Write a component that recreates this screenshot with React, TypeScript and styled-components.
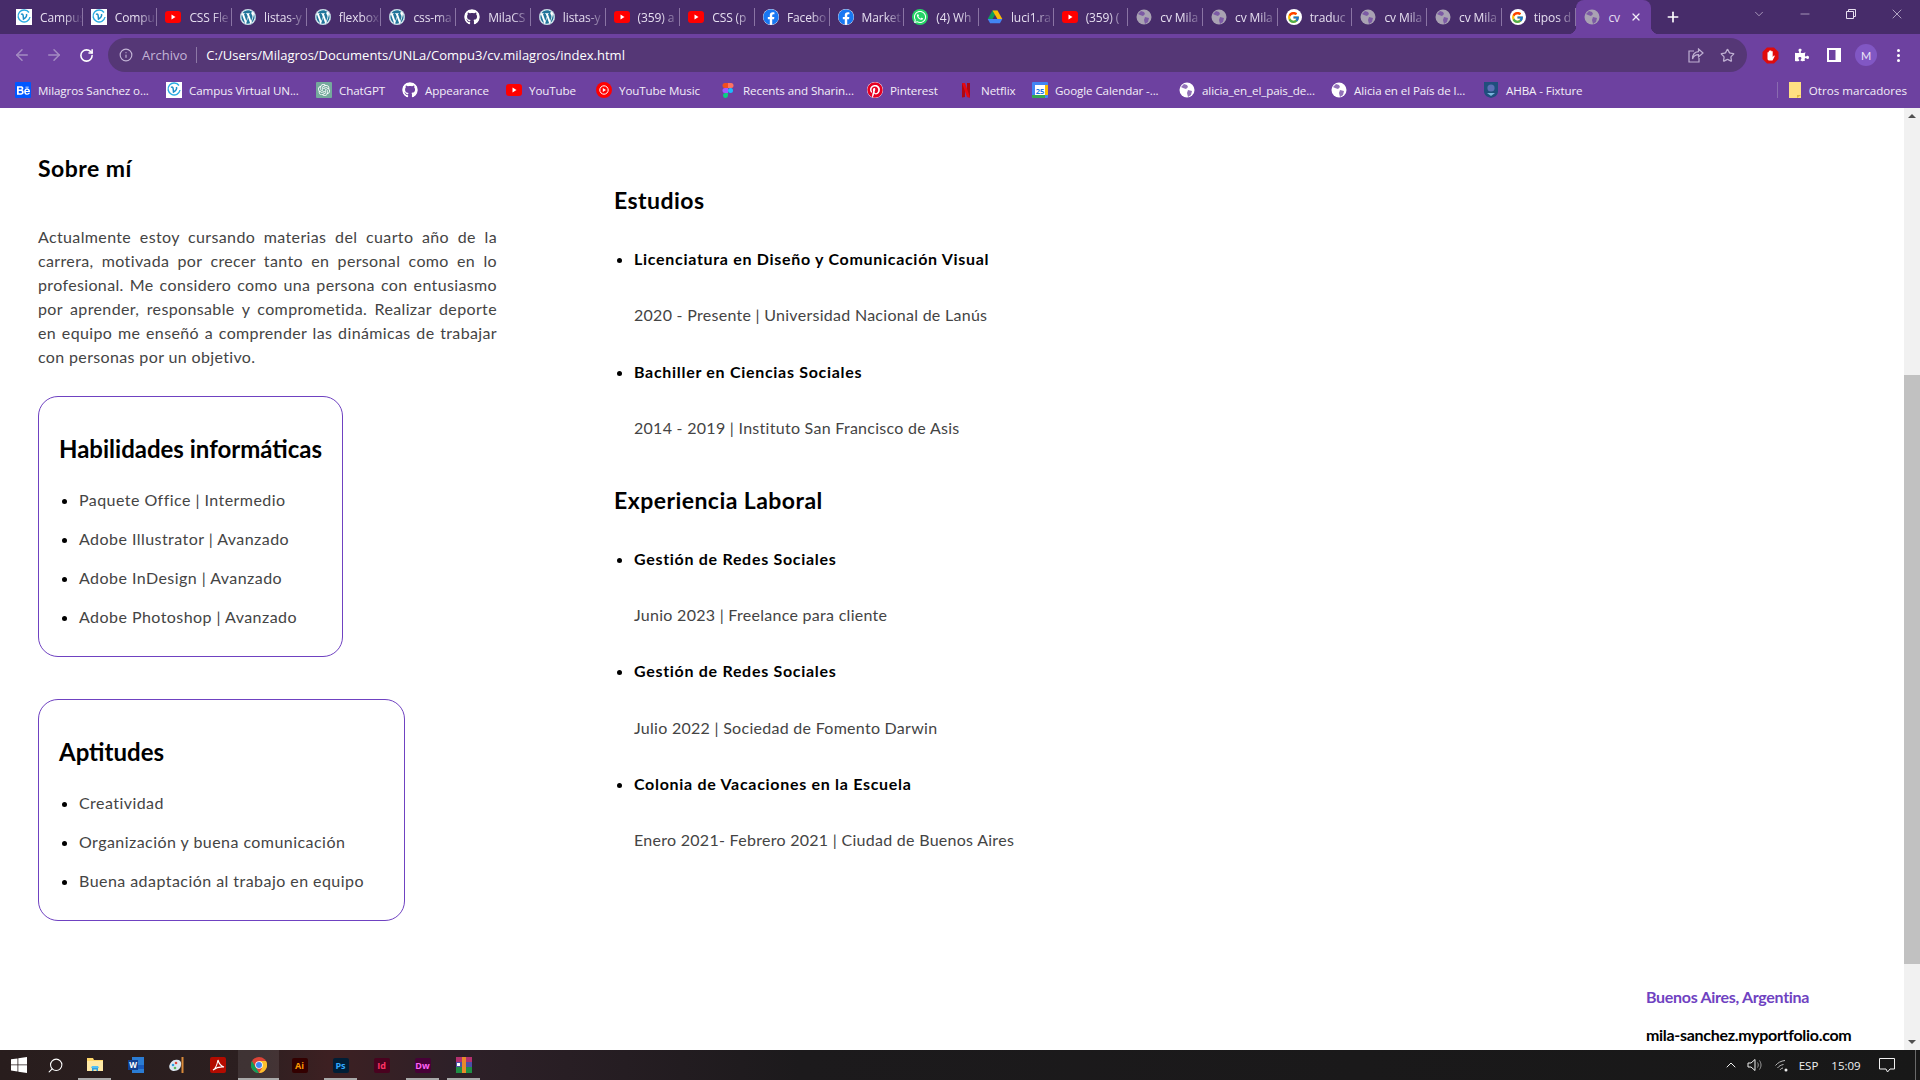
import React, { ReactNode } from 'react';
import styled, { createGlobalStyle } from 'styled-components';
import {
  ArrowLeft,
  ArrowRight,
  ChevronDown,
  ChevronUp,
  Info,
  Minus,
  Plus,
  RotateCw,
  Search,
  Star,
  X,
} from 'lucide-react';
import {
  FaFacebook,
  FaGithub,
  FaPinterest,
  FaPuzzlePiece,
  FaWhatsapp,
  FaWordpress,
} from 'react-icons/fa';
import { FcGoogle } from 'react-icons/fc';
import { SiBehance, SiOpenai } from 'react-icons/si';

const GlobalStyle = createGlobalStyle`
  html, body {
    margin: 0;
    height: 100%;
    overflow: hidden;
    background: #fff;
  }
  #root { height: 100%; }
`;

const Screen = styled.div`
  display: flex;
  flex-direction: column;
  height: 1080px;
  font-family: 'Lato', 'Open Sans', sans-serif;
`;

/* ---- browser chrome ---- */
const TabStrip = styled.div`
  display: flex;
  align-items: flex-end;
  height: 34px;
  padding-left: 8px;
  background: #472c6a;
  font-family: 'Open Sans', sans-serif;
  flex: none;
`;

const Tab = styled.div`
  position: relative;
  display: flex;
  align-items: center;
  gap: 8px;
  flex: none;
  width: 74.7px;
  height: 34px;
  padding-left: 8px;
  box-sizing: border-box;
  color: #e6dff0;
  font-size: 12px;
  &::after {
    content: '';
    position: absolute;
    right: 0;
    top: 8px;
    width: 1px;
    height: 18px;
    background: #8a74a4;
  }
`;

const ActiveTab = styled(Tab)`
  background: #6d41a0;
  border-radius: 8px 8px 0 0;
  &::before,
  &::after {
    content: '';
    position: absolute;
    top: auto;
    bottom: 0;
    width: 8px;
    height: 8px;
  }
  &::before {
    left: -8px;
    background: radial-gradient(circle at 0 0, transparent 8px, #6d41a0 8.5px);
  }
  &::after {
    right: -8px;
    background: radial-gradient(circle at 100% 0, transparent 8px, #6d41a0 8.5px);
  }
`;

const TabTitle = styled.span`
  flex: 1;
  min-width: 0;
  white-space: nowrap;
  overflow: hidden;
  letter-spacing: -0.1px;
  -webkit-mask-image: linear-gradient(to right, #000 55%, transparent 100%);
  mask-image: linear-gradient(to right, #000 55%, transparent 100%);
`;

const ActiveTitle = styled.span`
  flex: 1;
  letter-spacing: -0.1px;
`;

const ActiveClose = styled.span`
  display: flex;
  margin-right: 9px;
  color: #f2edf7;
`;

const NewTab = styled.span`
  display: flex;
  align-items: center;
  justify-content: center;
  width: 36px;
  height: 34px;
  margin-left: 4px;
  color: #fff;
`;

const WindowControls = styled.div`
  display: flex;
  align-self: flex-start;
  margin-left: auto;
  height: 28px;
  color: #e8e0f0;
`;

const WindowButton = styled.span`
  display: flex;
  align-items: center;
  justify-content: center;
  width: 46px;
`;

const Toolbar = styled.div`
  display: flex;
  align-items: center;
  height: 42px;
  flex: none;
  padding: 0 0 0 6px;
  box-sizing: border-box;
  background: #6d41a0;
`;

const NavButton = styled.span<{ $dim?: boolean }>`
  display: flex;
  align-items: center;
  justify-content: center;
  width: 32px;
  color: ${(p) => (p.$dim ? '#a48cc2' : '#fff')};
`;

const Omnibox = styled.div`
  display: flex;
  align-items: center;
  width: 1639px;
  height: 34px;
  margin-left: 6px;
  padding: 0 12px 0 11px;
  box-sizing: border-box;
  border-radius: 17px;
  background: #553776;
  font-family: 'Open Sans', sans-serif;
  font-size: 13px;
  color: #fff;
`;

const SchemeLabel = styled.span`
  margin-left: 9px;
  padding-right: 9px;
  border-right: 1px solid #8d78a6;
  color: #c3b4d6;
  line-height: 16px;
`;

const UrlText = styled.span`
  margin-left: 9px;
`;

const OmniActions = styled.div`
  display: flex;
  align-items: center;
  gap: 16px;
  margin-left: auto;
  color: #bfb0d2;
`;

const ExtensionRow = styled.div`
  display: flex;
  align-items: center;
  margin-left: 7px;
  color: #fff;
`;

const ExtensionSlot = styled.span`
  display: flex;
  align-items: center;
  justify-content: center;
  width: 32px;
`;

const Avatar = styled.span`
  display: flex;
  align-items: center;
  justify-content: center;
  width: 22px;
  height: 22px;
  border-radius: 50%;
  background: #8157c4;
  font-size: 11px;
  color: #efe8f7;
`;

const Dots = styled.span`
  display: flex;
  flex-direction: column;
  gap: 2px;
  span {
    width: 3px;
    height: 3px;
    border-radius: 50%;
    background: #fff;
  }
`;

const BookmarkBar = styled.div`
  display: flex;
  align-items: center;
  height: 32px;
  flex: none;
  padding: 0 0 4px 7px;
  box-sizing: border-box;
  background: #6d41a0;
  font-family: 'Open Sans', sans-serif;
  font-size: 11.6px;
  color: #f3eef8;
`;

const Bookmark = styled.div<{ $width: number }>`
  display: flex;
  align-items: center;
  gap: 7px;
  flex: none;
  width: ${(p) => p.$width}px;
  padding-left: 8px;
  box-sizing: border-box;
  white-space: nowrap;
  letter-spacing: -0.1px;
`;

const OtherBookmarks = styled.div`
  display: flex;
  align-items: center;
  gap: 8px;
  margin-left: auto;
  padding: 0 13px 0 11px;
  height: 16px;
  border-left: 1px solid #8a6bb0;
  white-space: nowrap;
`;

const FaviconBox = styled.span<{ $bg?: string; $color?: string; $round?: boolean }>`
  display: inline-flex;
  align-items: center;
  justify-content: center;
  flex: none;
  width: 16px;
  height: 16px;
  background: ${(p) => p.$bg || 'transparent'};
  color: ${(p) => p.$color || '#fff'};
  border-radius: ${(p) => (p.$round ? '50%' : '1px')};
  overflow: hidden;
`;

const Globe = ({ color }: { color: string }) => (
  <svg width="16" height="16" viewBox="0 0 16 16">
    <circle cx="8" cy="8" r="7.5" fill={color} />
    <path
      d="M5 2l3 1 1 2-2 2-3-1-2-1zM9 8l4 1-1 4-3 2-1-4z"
      fill="#6d41a0"
      opacity="0.75"
    />
  </svg>
);

const CampusIcon = () => (
  <svg width="16" height="16" viewBox="0 0 16 16">
    <rect width="16" height="16" fill="#fff" />
    <path d="M13 3.500A6 6 0 1 0 14 8" fill="none" stroke="#29abe2" strokeWidth="1.400" />
    <path d="M5 5.500c1.500-1 2 0 2.200 1.500l.3 3c2-1 3.500-3 3-5" fill="none" stroke="#1b8fc9" strokeWidth="1.500" />
  </svg>
);

const YouTubeIcon = () => (
  <svg width="16" height="12" viewBox="0 0 16 12">
    <rect width="16" height="12" rx="3" fill="#f00" />
    <path d="M6.500 3.500v5l4-2.500z" fill="#fff" />
  </svg>
);

const YouTubeMusicIcon = () => (
  <svg width="16" height="16" viewBox="0 0 16 16">
    <circle cx="8" cy="8" r="8" fill="#f00" />
    <circle cx="8" cy="8" r="4.200" fill="none" stroke="#fff" />
    <path d="M6.800 6v4L10 8z" fill="#fff" />
  </svg>
);

const DriveIcon = () => (
  <svg width="16" height="16" viewBox="0 0 16 16">
    <path d="M5.500 1.500h5L5.600 10H.7z" fill="#0f9d58" />
    <path d="M10.500 1.500l4.800 8.500h-4.900L5.500 1.500z" fill="#fbbc04" />
    <path d="M.7 10h14.600l-2.400 4.300H3.100z" fill="#4285f4" />
  </svg>
);

const FigmaIcon = () => (
  <svg width="16" height="16" viewBox="0 0 16 16">
    <path d="M5 1h3v5H5a2.500 2.500 0 010-5z" fill="#f24e1e" />
    <path d="M8 1h3a2.500 2.500 0 010 5H8z" fill="#ff7262" />
    <path d="M5 6h3v5H5a2.500 2.500 0 010-5z" fill="#a259ff" />
    <circle cx="10.500" cy="8.500" r="2.500" fill="#1abcfe" />
    <path d="M5 11h3v2.500a2.500 2.500 0 11-3-2.500z" fill="#0acf83" />
  </svg>
);

const NetflixIcon = () => (
  <svg width="16" height="16" viewBox="0 0 16 16">
    <path d="M4 1h3v14l-3 .4z" fill="#b00710" />
    <path d="M9 1h3v14.400l-3-.4z" fill="#b00710" />
    <path d="M4 1h3l5 14.400-3-.4z" fill="#e50914" />
  </svg>
);

const CalendarIcon = () => (
  <svg width="16" height="16" viewBox="0 0 16 16">
    <rect width="16" height="16" rx="1" fill="#4285f4" />
    <rect x="3" y="3" width="10" height="10" fill="#fff" />
    <path d="M0 13h13v3H1a1 1 0 01-1-1z" fill="#34a853" />
    <path d="M13 3h3v10h-3z" fill="#fbbc04" />
    <text x="8" y="11.500" fontSize="7.500" fontWeight="700" fill="#1a73e8" textAnchor="middle" fontFamily="Open Sans">
      25
    </text>
  </svg>
);

const ShieldIcon = () => (
  <svg width="16" height="18" viewBox="0 0 16 18">
    <path d="M1 1h14v9c0 4-3 6-7 7-4-1-7-3-7-7z" fill="#1f4f7d" />
    <circle cx="8" cy="7" r="3.600" fill="#5b6fb5" />
    <path d="M4 12h8l-4 3z" fill="#7ab6dc" />
  </svg>
);

const UBlockIcon = () => (
  <svg width="17" height="17" viewBox="0 0 17 17">
    <path d="M5 .5h7L16.500 5v7L12 16.500H5L.5 12V5z" fill="#e00b0b" />
    <path
      d="M5.500 8V5.500a.7.7 0 011.300 0V4a.7.7 0 011.300 0v-.3a.7.7 0 011.300 0V4.500a.7.7 0 011.300 0V10l1-1.200c.6-.5 1.200 0 .9.600L10.500 13.500H7c-1 0-1.500-1-1.500-2z"
      fill="#fff"
    />
  </svg>
);

const SidePanelIcon = () => (
  <svg width="14" height="14" viewBox="0 0 14 14">
    <path d="M0 0h14v14H0z" fill="#fff" />
    <path d="M2 2h6.500v10H2z" fill="#6d41a0" />
  </svg>
);

const ShareIcon = () => (
  <svg width="16" height="15" viewBox="0 0 16 15" fill="none" stroke="currentColor" strokeWidth="1.200">
    <path d="M6 3H1v11h10V10" />
    <path d="M10.500 1L15 5l-4.500 4V6.700C7.500 6.700 5.500 8 4.500 11c0-4.500 2-7 6-7.300z" />
  </svg>
);

const FolderIcon = () => (
  <svg width="12" height="16" viewBox="0 0 12 16">
    <path d="M0 0h12v16H0z" fill="#ffe082" />
    <path d="M8 16v-3h4z" fill="#e0b93e" />
  </svg>
);

const RestoreIcon = () => (
  <svg width="12" height="12" viewBox="0 0 12 12" fill="none" stroke="currentColor">
    <path d="M1.500 3.500h7v7h-7zM3.500 3.500v-2h7v7h-2" />
  </svg>
);

const GlobeTab = () => <Globe color="#a9a2b3" />;
const WordpressIcon = () => (
  <FaviconBox $round $bg="#fff" $color="#21759b">
    <FaWordpress size={16} />
  </FaviconBox>
);
const GithubIcon = () => (
  <FaviconBox $round>
    <FaGithub size={16} />
  </FaviconBox>
);
const FacebookIcon = () => (
  <FaviconBox $round $bg="#fff" $color="#1877f2">
    <FaFacebook size={16} />
  </FaviconBox>
);
const WhatsappIcon = () => (
  <FaviconBox $round $bg="#25d366" $color="#fff">
    <FaWhatsapp size={14} />
  </FaviconBox>
);
const GoogleIcon = () => (
  <FaviconBox $round $bg="#fff">
    <FcGoogle size={13} />
  </FaviconBox>
);

const tabs: Array<{ icon: ReactNode; title: string }> = [
  { icon: <CampusIcon />, title: 'Campus' },
  { icon: <CampusIcon />, title: 'Compu' },
  { icon: <YouTubeIcon />, title: 'CSS Fle' },
  { icon: <WordpressIcon />, title: 'listas-y' },
  { icon: <WordpressIcon />, title: 'flexbox' },
  { icon: <WordpressIcon />, title: 'css-ma' },
  { icon: <GithubIcon />, title: 'MilaCS' },
  { icon: <WordpressIcon />, title: 'listas-y' },
  { icon: <YouTubeIcon />, title: '(359) a' },
  { icon: <YouTubeIcon />, title: 'CSS (p' },
  { icon: <FacebookIcon />, title: 'Facebo' },
  { icon: <FacebookIcon />, title: 'Market' },
  { icon: <WhatsappIcon />, title: '(4) Wh' },
  { icon: <DriveIcon />, title: 'luci1.ra' },
  { icon: <YouTubeIcon />, title: '(359) (' },
  { icon: <GlobeTab />, title: 'cv Mila' },
  { icon: <GlobeTab />, title: 'cv Mila' },
  { icon: <GoogleIcon />, title: 'traduc' },
  { icon: <GlobeTab />, title: 'cv Mila' },
  { icon: <GlobeTab />, title: 'cv Mila' },
  { icon: <GoogleIcon />, title: 'tipos d' },
];

const bookmarks: Array<{ icon: ReactNode; label: string; width: number }> = [
  {
    icon: (
      <FaviconBox $bg="#0057ff">
        <SiBehance size={13} />
      </FaviconBox>
    ),
    label: 'Milagros Sanchez o...',
    width: 151,
  },
  { icon: <CampusIcon />, label: 'Campus Virtual UN...', width: 150 },
  {
    icon: (
      <FaviconBox $bg="#74aa9c" $color="#fff">
        <SiOpenai size={12} />
      </FaviconBox>
    ),
    label: 'ChatGPT',
    width: 86,
  },
  {
    icon: (
      <FaviconBox $round>
        <FaGithub size={16} />
      </FaviconBox>
    ),
    label: 'Appearance',
    width: 104,
  },
  { icon: <YouTubeIcon />, label: 'YouTube', width: 90 },
  { icon: <YouTubeMusicIcon />, label: 'YouTube Music', width: 124 },
  { icon: <FigmaIcon />, label: 'Recents and Sharin...', width: 147 },
  {
    icon: (
      <FaviconBox $round $bg="#fff" $color="#e60023">
        <FaPinterest size={16} />
      </FaviconBox>
    ),
    label: 'Pinterest',
    width: 91,
  },
  { icon: <NetflixIcon />, label: 'Netflix', width: 74 },
  { icon: <CalendarIcon />, label: 'Google Calendar -...', width: 147 },
  { icon: <Globe color="#fff" />, label: 'alicia_en_el_pais_de...', width: 152 },
  { icon: <Globe color="#fff" />, label: 'Alicia en el País de l...', width: 152 },
  { icon: <ShieldIcon />, label: 'AHBA - Fixture', width: 130 },
];

/* ---- page ---- */
const Body = styled.div`
  display: flex;
  flex: 1;
  min-height: 0;
`;

const Page = styled.main`
  flex: 1;
  min-width: 0;
  overflow: hidden;
  padding: 46px 0 0 38px;
  color: #444;
`;

const Columns = styled.div`
  display: grid;
  grid-template-columns: 459px 1fr;
  column-gap: 117px;
`;

const SectionTitle = styled.h2`
  margin: 0;
  font-size: 23px;
  line-height: 28px;
  font-weight: 700;
  color: #000;
  letter-spacing: 0.45px;
`;

const Intro = styled.p`
  margin: 43px 0 27px;
  font-size: 16px;
  line-height: 24px;
  text-align: justify;
  letter-spacing: 0.36px;
`;

const SkillCard = styled.section<{ $width: number; $top?: number }>`
  width: ${(p) => p.$width}px;
  margin-top: ${(p) => p.$top || 0}px;
  padding: 37px 20px 29px;
  box-sizing: border-box;
  border: 1px solid #6f42c1;
  border-radius: 20px;
`;

const CardTitle = styled.h3`
  margin: 0 0 26px;
  font-size: 24px;
  line-height: 30px;
  font-weight: 700;
  color: #000;
  white-space: nowrap;
`;

const SkillList = styled.ul`
  margin: 0;
  padding: 0 0 0 20px;
  display: flex;
  flex-direction: column;
  gap: 19px;
  font-size: 16px;
  line-height: 20px;
  letter-spacing: 0.45px;
  white-space: nowrap;
  li::marker {
    color: #000;
  }
`;

const Column = styled.div`
  padding-top: 32px;
`;

const Timeline = styled.ul<{ $bottom?: number }>`
  margin: 33px 0 ${(p) => p.$bottom || 0}px;
  padding: 0 0 0 20px;
  font-size: 16px;
  line-height: 24px;
  letter-spacing: 0.28px;
`;

const TimelineTitle = styled.li`
  font-weight: 700;
  color: #000;
  letter-spacing: 0.7px;
`;

const TimelineDetail = styled.p`
  margin: 32.3px 0;
`;

const Footer = styled.footer`
  width: 258px;
  margin: 64px 0 0 auto;
  display: flex;
  flex-direction: column;
  gap: 14px;
  font-size: 16px;
  line-height: 24px;
  font-weight: 700;
  letter-spacing: -0.3px;
`;

const Location = styled.span`
  color: #6f42c1;
`;

const Portfolio = styled.span`
  color: #000;
`;

const Scrollbar = styled.div`
  position: relative;
  display: flex;
  flex-direction: column;
  justify-content: space-between;
  align-items: center;
  width: 16px;
  flex: none;
  background: #f1f1f1;
`;

const ScrollThumb = styled.span`
  position: absolute;
  top: 267px;
  left: 0;
  width: 16px;
  height: 589px;
  background: #c1c1c1;
`;

const ArrowUp = styled.span`
  margin-top: 6px;
  border: 4px solid transparent;
  border-top: 0;
  border-bottom: 4px solid #505050;
`;

const ArrowDown = styled.span`
  margin-bottom: 6px;
  border: 4px solid transparent;
  border-bottom: 0;
  border-top: 4px solid #505050;
`;

/* ---- taskbar ---- */
const Taskbar = styled.footer`
  display: flex;
  align-items: center;
  height: 30px;
  flex: none;
  background: linear-gradient(to right, #281d1d 0, #2c1f20 250px, #3d2022 330px, #2e2028 450px, #1c1a1c 800px, #181818 100%);
  font-family: 'Open Sans', sans-serif;
  color: #fff;
`;

const TaskSlot = styled.span<{ $active?: boolean; $open?: boolean; $width?: number }>`
  position: relative;
  display: flex;
  align-items: center;
  justify-content: center;
  flex: none;
  width: ${(p) => p.$width || 41}px;
  height: 30px;
  background: ${(p) => (p.$active ? 'rgba(255,255,255,0.09)' : 'transparent')};
  &::after {
    content: '';
    display: ${(p) => (p.$open ? 'block' : 'none')};
    position: absolute;
    left: ${(p) => (p.$active ? '0' : '4px')};
    right: ${(p) => (p.$active ? '0' : '4px')};
    bottom: 0;
    height: 2px;
    background: #a9a9a9;
  }
`;

const AdobeTile = styled.span<{ $bg: string; $fg: string }>`
  display: flex;
  align-items: center;
  justify-content: center;
  width: 16px;
  height: 15px;
  border-radius: 2px;
  background: ${(p) => p.$bg};
  color: ${(p) => p.$fg};
  font-size: 9px;
  font-weight: 700;
`;

const Tray = styled.div`
  display: flex;
  align-items: center;
  margin-left: auto;
  font-size: 11.5px;
  color: #f0f0f0;
`;

const TrayItem = styled.span<{ $width: number }>`
  display: flex;
  align-items: center;
  justify-content: center;
  width: ${(p) => p.$width}px;
`;

const ShowDesktop = styled.span`
  width: 1px;
  height: 30px;
  margin-left: 10px;
  margin-right: 4px;
  background: #6a6a6a;
`;

const WindowsLogo = () => (
  <svg width="16" height="16" viewBox="0 0 16 16" fill="#fff">
    <path d="M0 2.300l6.500-.9v6.100H0zM7.300 1.300L16 0v7.500H7.300zM0 8.300h6.500v6.200L0 13.600zM7.300 8.300H16V16l-8.700-1.200z" />
  </svg>
);

const ExplorerIcon = () => (
  <svg width="16" height="16" viewBox="0 0 16 16">
    <path d="M0 1h6l1 2h9v11H0z" fill="#ffd76b" />
    <path d="M0 4h16v10H0z" fill="#ffe9a6" />
    <path d="M5 14v-3h6v3H9.500v-1.500h-3V14z" fill="#2f9fe0" />
    <path d="M4 11l1-2h6l1 2z" fill="#53c0f5" />
  </svg>
);

const WordIcon = () => (
  <svg width="16" height="16" viewBox="0 0 16 16">
    <path d="M4 0h12v16H4z" fill="#2b7cd3" />
    <path d="M4 8h12v4H4z" fill="#185abd" />
    <path d="M0 3h10v10H0z" fill="#103f91" />
    <text x="5" y="11" fontSize="8" fontWeight="700" fill="#fff" textAnchor="middle" fontFamily="Open Sans">
      W
    </text>
  </svg>
);

const PaintIcon = () => (
  <svg width="16" height="16" viewBox="0 0 16 16">
    <path d="M6 3c4-1 7 1 6 5 0 3-3 6-7 6C1 14-1 10 1 7c1-2 3-4 5-4z" fill="#dbe6f0" />
    <circle cx="4" cy="8" r="1.300" fill="#2f9fe0" />
    <circle cx="7" cy="6" r="1.300" fill="#e0483e" />
    <circle cx="6" cy="11" r="1.300" fill="#5cb85c" />
    <path d="M12.500 0h2v16h-2z" fill="#d98a3a" />
  </svg>
);

const AcrobatIcon = () => (
  <svg width="16" height="16" viewBox="0 0 16 16">
    <rect width="16" height="16" rx="2" fill="#b30b00" />
    <path
      d="M3 13c2-1 4-5 5-10 1 4 3 6 6 7-4-.5-7 0-11 3z"
      fill="none"
      stroke="#fff"
      strokeWidth="1.100"
    />
  </svg>
);

const ChromeIcon = () => (
  <svg width="16" height="16" viewBox="0 0 16 16">
    <circle cx="8" cy="8" r="8" fill="#db4437" />
    <path d="M8 16a8 8 0 01-7-12l4 7 3 5z" fill="#0f9d58" />
    <path d="M8 16a8 8 0 007-12H8l3 7z" fill="#fbc02d" />
    <circle cx="8" cy="8" r="3.800" fill="#fff" />
    <circle cx="8" cy="8" r="3" fill="#4285f4" />
  </svg>
);

const WinrarIcon = () => (
  <svg width="16" height="16" viewBox="0 0 16 16">
    <path d="M0 0h16v5H0z" fill="#b3306e" />
    <path d="M0 5h16v5H0z" fill="#4b4fa8" />
    <path d="M0 10h16v6H0z" fill="#1f8f45" />
    <path d="M6 0h4v16H6z" fill="#e88a2a" />
    <path d="M1 6h3v3H1z" fill="#fff" />
  </svg>
);

const VolumeIcon = () => (
  <svg width="16" height="14" viewBox="0 0 16 14" fill="none" stroke="#eee">
    <path d="M1 5h3l4-3.500v11L4 9H1z" />
    <path d="M10.500 4.500c1 1.500 1 3.500 0 5M12.500 2.500c2 3 2 6 0 9" stroke="#999" />
  </svg>
);

const WifiIcon = () => (
  <svg width="14" height="13" viewBox="0 0 14 13" fill="none" stroke="#bbb">
    <path d="M.5 6.500C3 3.500 6 2 10 1.500M2.500 9C4 7 6 6 8.500 5.500M5 11c.6-1 1.500-1.700 3-2" />
    <circle cx="11" cy="11" r="1.500" fill="#eee" stroke="none" />
  </svg>
);

const NotificationIcon = () => (
  <svg width="16" height="15" viewBox="0 0 16 15" fill="none" stroke="#f2f2f2">
    <path d="M.5.500h15v10.500h-4.500l-2.500 3-1.500-3H.5z" />
  </svg>
);

const studies = [
  ['Licenciatura en Diseño y Comunicación Visual', '2020 - Presente | Universidad Nacional de Lanús'],
  ['Bachiller en Ciencias Sociales', '2014 - 2019 | Instituto San Francisco de Asis'],
];

const jobs = [
  ['Gestión de Redes Sociales', 'Junio 2023 | Freelance para cliente'],
  ['Gestión de Redes Sociales', 'Julio 2022 | Sociedad de Fomento Darwin'],
  ['Colonia de Vacaciones en la Escuela', 'Enero 2021- Febrero 2021 | Ciudad de Buenos Aires'],
];

const App = () => (
  <Screen>
    <GlobalStyle />
    <TabStrip>
      {tabs.map((tab, index) => (
        <Tab key={index}>
          {tab.icon}
          <TabTitle>{tab.title}</TabTitle>
        </Tab>
      ))}
      <ActiveTab>
        <GlobeTab />
        <ActiveTitle>cv</ActiveTitle>
        <ActiveClose>
          <X size={12} strokeWidth={2.5} />
        </ActiveClose>
      </ActiveTab>
      <NewTab>
        <Plus size={16} strokeWidth={2.5} />
      </NewTab>
      <WindowControls>
        <WindowButton>
          <ChevronDown size={14} strokeWidth={1} />
        </WindowButton>
        <WindowButton>
          <Minus size={14} strokeWidth={1} />
        </WindowButton>
        <WindowButton>
          <RestoreIcon />
        </WindowButton>
        <WindowButton>
          <X size={16} strokeWidth={1} />
        </WindowButton>
      </WindowControls>
    </TabStrip>

    <Toolbar>
      <NavButton $dim>
        <ArrowLeft size={18} />
      </NavButton>
      <NavButton $dim>
        <ArrowRight size={18} />
      </NavButton>
      <NavButton>
        <RotateCw size={15} strokeWidth={2.5} />
      </NavButton>
      <Omnibox>
        <Info size={14} color="#c3b4d6" />
        <SchemeLabel>Archivo</SchemeLabel>
        <UrlText>C:/Users/Milagros/Documents/UNLa/Compu3/cv.milagros/index.html</UrlText>
        <OmniActions>
          <ShareIcon />
          <Star size={15} />
        </OmniActions>
      </Omnibox>
      <ExtensionRow>
        <ExtensionSlot>
          <UBlockIcon />
        </ExtensionSlot>
        <ExtensionSlot>
          <FaPuzzlePiece size={14} />
        </ExtensionSlot>
        <ExtensionSlot>
          <SidePanelIcon />
        </ExtensionSlot>
        <ExtensionSlot>
          <Avatar>M</Avatar>
        </ExtensionSlot>
        <ExtensionSlot>
          <Dots>
            <span />
            <span />
            <span />
          </Dots>
        </ExtensionSlot>
      </ExtensionRow>
    </Toolbar>

    <BookmarkBar>
      {bookmarks.map((bookmark) => (
        <Bookmark key={bookmark.label} $width={bookmark.width}>
          {bookmark.icon}
          <span>{bookmark.label}</span>
        </Bookmark>
      ))}
      <OtherBookmarks>
        <FolderIcon />
        Otros marcadores
      </OtherBookmarks>
    </BookmarkBar>

    <Body>
      <Page>
        <Columns>
          <div>
            <SectionTitle>Sobre mí</SectionTitle>
            <Intro>
              Actualmente estoy cursando materias del cuarto año de la carrera, motivada por crecer
              tanto en personal como en lo profesional. Me considero como una persona con entusiasmo
              por aprender, responsable y comprometida. Realizar deporte en equipo me enseñó a
              comprender las dinámicas de trabajar con personas por un objetivo.
            </Intro>
            <SkillCard $width={305}>
              <CardTitle>Habilidades informáticas</CardTitle>
              <SkillList>
                <li>Paquete Office | Intermedio</li>
                <li>Adobe Illustrator | Avanzado</li>
                <li>Adobe InDesign | Avanzado</li>
                <li>Adobe Photoshop | Avanzado</li>
              </SkillList>
            </SkillCard>
            <SkillCard $width={367} $top={42}>
              <CardTitle>Aptitudes</CardTitle>
              <SkillList>
                <li>Creatividad</li>
                <li>Organización y buena comunicación</li>
                <li>Buena adaptación al trabajo en equipo</li>
              </SkillList>
            </SkillCard>
          </div>
          <Column>
            <SectionTitle>Estudios</SectionTitle>
            <Timeline $bottom={46}>
              {studies.map(([title, detail], index) => (
                <React.Fragment key={index}>
                  <TimelineTitle>{title}</TimelineTitle>
                  <TimelineDetail>{detail}</TimelineDetail>
                </React.Fragment>
              ))}
            </Timeline>
            <SectionTitle>Experiencia Laboral</SectionTitle>
            <Timeline>
              {jobs.map(([title, detail], index) => (
                <React.Fragment key={index}>
                  <TimelineTitle>{title}</TimelineTitle>
                  <TimelineDetail>{detail}</TimelineDetail>
                </React.Fragment>
              ))}
            </Timeline>
          </Column>
        </Columns>
        <Footer>
          <Location>Buenos Aires, Argentina</Location>
          <Portfolio>mila-sanchez.myportfolio.com</Portfolio>
        </Footer>
      </Page>
      <Scrollbar>
        <ArrowUp />
        <ScrollThumb />
        <ArrowDown />
      </Scrollbar>
    </Body>

    <Taskbar>
      <TaskSlot $width={37}>
        <WindowsLogo />
      </TaskSlot>
      <TaskSlot $width={37}>
        <Search size={17} strokeWidth={1.5} style={{ transform: 'scaleX(-1)' }} />
      </TaskSlot>
      <TaskSlot $open>
        <ExplorerIcon />
      </TaskSlot>
      <TaskSlot>
        <WordIcon />
      </TaskSlot>
      <TaskSlot>
        <PaintIcon />
      </TaskSlot>
      <TaskSlot>
        <AcrobatIcon />
      </TaskSlot>
      <TaskSlot $active $open>
        <ChromeIcon />
      </TaskSlot>
      <TaskSlot>
        <AdobeTile $bg="#330000" $fg="#ff9a00">
          Ai
        </AdobeTile>
      </TaskSlot>
      <TaskSlot $open>
        <AdobeTile $bg="#001e36" $fg="#31a8ff">
          Ps
        </AdobeTile>
      </TaskSlot>
      <TaskSlot>
        <AdobeTile $bg="#49021f" $fg="#ff3366">
          Id
        </AdobeTile>
      </TaskSlot>
      <TaskSlot $open>
        <AdobeTile $bg="#470137" $fg="#ff61f6">
          Dw
        </AdobeTile>
      </TaskSlot>
      <TaskSlot $open>
        <WinrarIcon />
      </TaskSlot>
      <Tray>
        <TrayItem $width={18}>
          <ChevronUp size={16} strokeWidth={1.5} />
        </TrayItem>
        <TrayItem $width={30}>
          <VolumeIcon />
        </TrayItem>
        <TrayItem $width={24}>
          <WifiIcon />
        </TrayItem>
        <TrayItem $width={29}>ESP</TrayItem>
        <TrayItem $width={46}>15:09</TrayItem>
        <TrayItem $width={36}>
          <NotificationIcon />
        </TrayItem>
        <ShowDesktop />
      </Tray>
    </Taskbar>
  </Screen>
);

export default App;
